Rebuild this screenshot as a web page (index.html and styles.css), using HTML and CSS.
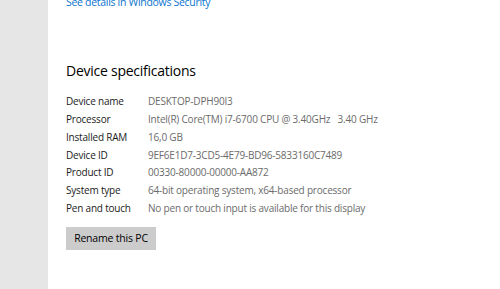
FILE: index.html
```html
<!DOCTYPE html>
<html>
<head>
<meta charset="utf-8">
<link rel="stylesheet" href="styles.css">
</head>
<body>
<div class="window">
  <div class="sidebar"></div>
  <div class="main">
    <a class="link" href="#">See details in Windows Security</a>
    <h2 class="heading">Device specifications</h2>
    <div class="specs">
      <div class="label">Device name</div><div class="value">DESKTOP-DPH90I3</div>
      <div class="label">Processor</div><div class="value">Intel(R) Core(TM) i7-6700 CPU @ 3.40GHz&nbsp;&nbsp;&nbsp;3.40 GHz</div>
      <div class="label">Installed RAM</div><div class="value">16,0 GB</div>
      <div class="label">Device ID</div><div class="value">9EF6E1D7-3CD5-4E79-BD96-5833160C7489</div>
      <div class="label">Product ID</div><div class="value">00330-80000-00000-AA872</div>
      <div class="label">System type</div><div class="value">64-bit operating system, x64-based processor</div>
      <div class="label">Pen and touch</div><div class="value">No pen or touch input is available for this display</div>
    </div>
    <button class="btn">Rename this PC</button>
  </div>
</div>
</body>
</html>
```
FILE: styles.css
```css
html, body {
  margin: 0;
  padding: 0;
  background: #ffffff;
  width: 500px;
  height: 289px;
  overflow: hidden;
}
.window {
  display: flex;
  height: 289px;
  font-family: "Open Sans", "Noto Sans", sans-serif;
  letter-spacing: -0.2px;
}
.sidebar {
  width: 48px;
  flex: none;
  background: #e6e6e6;
}
.main {
  flex: 1;
  padding-left: 18px;
  display: flex;
  flex-direction: column;
  align-items: flex-start;
  margin-top: -6px;
}
.link {
  color: #0a74d0;
  text-decoration: none;
  font-size: 10.5px;
  letter-spacing: -0.3px;
  line-height: 16px;
}
.heading {
  margin: 51px 0 0 0;
  font-weight: 400;
  font-size: 14px;
  letter-spacing: -0.25px;
  line-height: 20px;
  color: #000;
}
.specs {
  display: grid;
  grid-template-columns: 82px auto;
  grid-auto-rows: 17.85px;
  margin-top: 12px;
  font-size: 10px;
  line-height: 17.85px;
}
.label {
  color: #1a1a1a;
}
.value {
  color: #6b6b6b;
}
.btn {
  margin-top: 9px;
  border: none;
  background: #cccccc;
  color: #000;
  font-family: inherit;
  letter-spacing: -0.2px;
  font-size: 10.5px;
  height: 23px;
  width: 90px;
  padding: 0;
}
```
